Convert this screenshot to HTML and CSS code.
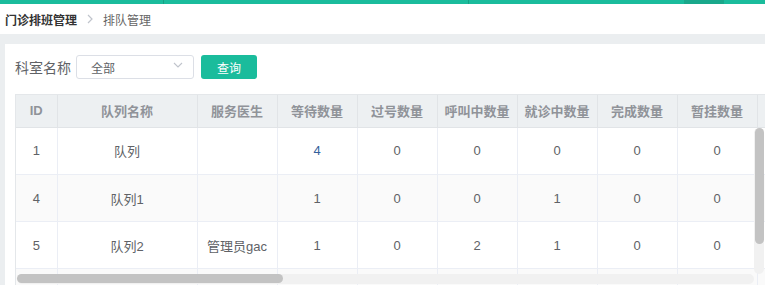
FILE: index.html
```html
<!DOCTYPE html>
<html lang="zh-CN">
<head>
<meta charset="utf-8">
<title>排队管理</title>
<link rel="stylesheet" href="styles.css">
</head>
<body>
<div class="topbar">
  <span class="seg seg-a"></span><span class="divline"></span>
  <span class="seg seg-b"></span><span class="divline"></span>
  <span class="seg seg-c"></span><span class="seg seg-active"></span>
  <span class="seg seg-d"></span>
</div>
<div class="crumbs">
  <span class="crumb-main">门诊排班管理</span>
  <svg class="crumb-sep" width="6" height="10" viewBox="0 0 6 10"><path d="M1 1 L5 5 L1 9" fill="none" stroke="#c0c4cc" stroke-width="1.2"/></svg>
  <span class="crumb-cur">排队管理</span>
</div>
<div class="main">
  <div class="panel">
    <div class="filter">
      <span class="label">科室名称</span>
      <div class="select">
        <span class="select-text">全部</span>
        <svg class="chev" width="10" height="6" viewBox="0 0 10 6"><path d="M1 1 L5 5 L9 1" fill="none" stroke="#c0c4cc" stroke-width="1.1"/></svg>
      </div>
      <button class="btn">查询</button>
    </div>
    <div class="tablewrap">
      <table class="thead">
        <colgroup><col class="c-id"><col class="c-name"><col class="c-n"><col class="c-n"><col class="c-n"><col class="c-n"><col class="c-n"><col class="c-n"><col class="c-n"><col class="c-g"></colgroup>
        <tr>
          <th>ID</th><th>队列名称</th><th>服务医生</th><th>等待数量</th><th>过号数量</th><th>呼叫中数量</th><th>就诊中数量</th><th>完成数量</th><th>暂挂数量</th><th class="gutter"></th>
        </tr>
      </table>
      <div class="tbody">
        <table class="body">
          <colgroup><col class="c-id"><col class="c-name"><col class="c-n"><col class="c-n"><col class="c-n"><col class="c-n"><col class="c-n"><col class="c-n"><col class="c-n"><col class="c-g"></colgroup>
          <tr><td>1</td><td>队列</td><td></td><td class="link">4</td><td>0</td><td>0</td><td>0</td><td>0</td><td>0</td><td></td></tr>
          <tr class="stripe"><td>4</td><td>队列1</td><td></td><td>1</td><td>0</td><td>0</td><td>1</td><td>0</td><td>0</td><td></td></tr>
          <tr><td>5</td><td>队列2</td><td>管理员gac</td><td>1</td><td>0</td><td>2</td><td>1</td><td>0</td><td>0</td><td></td></tr>
          <tr class="stripe"><td></td><td></td><td></td><td></td><td></td><td></td><td></td><td></td><td></td><td></td></tr>
        </table>
        <div class="vscroll"><div class="vthumb"></div></div>
        <div class="hscroll"><div class="hthumb"></div></div>
      </div>
    </div>
  </div>
</div>
</body>
</html>
```
FILE: styles.css
```css
* { box-sizing: border-box; }
html, body { margin: 0; padding: 0; }
body {
  width: 765px;
  height: 285px;
  overflow: hidden;
  background: #ebeef0;
  font-family: "Liberation Sans", "Noto Sans CJK SC", sans-serif;
  color: #606266;
}
.topbar {
  height: 4px;
  display: flex;
  background: #1abc9c;
}
.topbar .seg { display: block; height: 4px; }
.seg-a { width: 163px; }
.seg-b { width: 304px; }
.seg-c { width: 215px; }
.seg-active { width: 40px; background: #19a88b; }
.seg-d { flex: 1; }
.divline { display: block; width: 1px; height: 4px; background: #17a084; }
.crumbs {
  height: 30px;
  background: #fff;
  display: flex;
  align-items: center;
  padding-left: 5px;
  font-size: 12px;
}
.crumb-main { font-weight: bold; color: #333; }
.crumb-sep { margin: 0 10px 0 10px; }
.crumb-cur { color: #666; }
.main {
  padding: 10px 0 0 5px;
}
.panel {
  background: #fff;
  height: 241px;
  padding: 11px 0 0 10px;
  overflow: hidden;
}
.filter {
  display: flex;
  align-items: center;
  height: 24px;
}
.label { font-size: 14px; color: #606266; margin-right: 5px; }
.select {
  width: 118px;
  height: 24px;
  border: 1px solid #dcdfe6;
  border-radius: 3px;
  display: flex;
  align-items: center;
  justify-content: space-between;
  padding: 0 10px 0 14px;
  font-size: 12px;
  color: #606266;
}
.chev { margin-top: -4px; }
.btn {
  margin-left: 7px;
  width: 56px;
  height: 24px;
  border: none;
  border-radius: 3px;
  background: #1abc9c;
  color: #fff;
  font-size: 12px;
  font-family: inherit;
  padding: 0;
}
.tablewrap {
  margin-top: 15px;
  width: 750px;
  border-top: 1px solid #e4e7ea;
  border-left: 1px solid #e4e7ea;
  position: relative;
  overflow: hidden;
}
table {
  border-collapse: collapse;
  table-layout: fixed;
  width: 750px;
}
.c-id { width: 41px; }
.c-name { width: 140px; }
.c-n { width: 80px; }
.c-g { width: 9px; }
.thead th {
  height: 32px;
  background: #edf0f2;
  color: #909399;
  font-size: 13px;
  font-weight: bold;
  border-right: 1px solid #e1e4e7;
  border-bottom: 1px solid #e1e4e7;
  padding: 0;
  text-align: center;
}
.tbody {
  position: relative;
  height: 200px;
}
.body td {
  height: 47px;
  border-right: 1px solid #ebeef5;
  border-bottom: 1px solid #ebeef5;
  text-align: center;
  font-size: 13px;
  color: #606266;
  padding: 0;
}
.body tr.stripe td { background: #fafafa; }
.body td.link { color: #34619c; }
.vscroll {
  position: absolute;
  left: 738px;
  top: 0;
  width: 10px;
  height: 146px;
  background: #f1f1f1;
  border-radius: 5px;
}
.vthumb {
  width: 9px;
  height: 116px;
  margin-left: 1px;
  background: #c3c3c3;
  border-radius: 5px;
}
.hscroll {
  position: absolute;
  left: 1px;
  top: 146px;
  width: 737px;
  height: 10px;
  background: #f1f1f1;
  border-radius: 5px;
}
.hthumb {
  width: 266px;
  height: 9px;
  background: #c3c3c3;
  border-radius: 5px;
}
```
